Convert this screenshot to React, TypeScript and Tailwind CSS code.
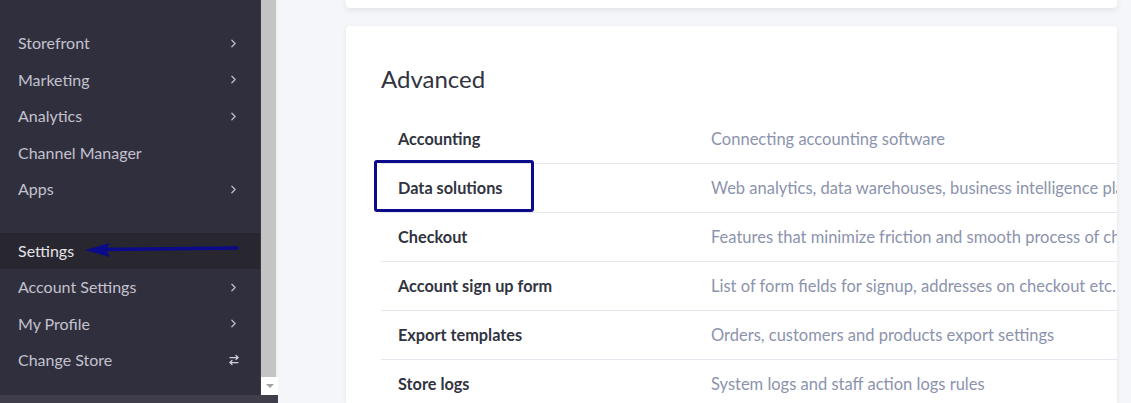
import { ChevronRight, ArrowRightLeft } from "lucide-react";

type NavItem = { label: string; chevron?: boolean; swap?: boolean; active?: boolean };

const navTop: NavItem[] = [
  { label: "Storefront", chevron: true },
  { label: "Marketing", chevron: true },
  { label: "Analytics", chevron: true },
  { label: "Channel Manager" },
  { label: "Apps", chevron: true },
];

const navBottom: NavItem[] = [
  { label: "Settings", active: true },
  { label: "Account Settings", chevron: true },
  { label: "My Profile", chevron: true },
  { label: "Change Store", swap: true },
];

const rows = [
  { name: "Accounting", desc: "Connecting accounting software" },
  { name: "Data solutions", desc: "Web analytics, data warehouses, business intelligence platforms" },
  { name: "Checkout", desc: "Features that minimize friction and smooth process of checkout" },
  { name: "Account sign up form", desc: "List of form fields for signup, addresses on checkout etc." },
  { name: "Export templates", desc: "Orders, customers and products export settings" },
  { name: "Store logs", desc: "System logs and staff action logs rules" },
];

function NavRow({ item }: { item: NavItem }) {
  return (
    <div
      className={
        "flex h-[36.5px] items-center justify-between pl-[18px] pr-[20px] text-[16px] " +
        (item.active ? "bg-[#28272f] text-[#e4e4ea]" : "text-[#c3c2cf]")
      }
    >
      <span>{item.label}</span>
      {item.chevron && <ChevronRight size={13} strokeWidth={2.5} className="text-[#b9b8c6]" />}
      {item.swap && <ArrowRightLeft size={12} strokeWidth={2.5} className="text-[#d0cfda]" />}
    </div>
  );
}

export default function App() {
  return (
    <div
      className="relative flex h-[403px] w-[1131px] overflow-hidden bg-[#f5f6f9]"
      style={{ fontFamily: "Lato, 'Noto Sans', sans-serif" }}
    >
      {/* sidebar */}
      <aside className="flex w-[278px] shrink-0 flex-col">
        <div className="flex flex-1">
          <nav className="w-[260px] bg-[#302f3d] pt-[25px]">
            {navTop.map((item) => (
              <NavRow key={item.label} item={item} />
            ))}
            <div className="h-[25px]" />
            {navBottom.map((item) => (
              <NavRow key={item.label} item={item} />
            ))}
          </nav>
          <div className="flex w-[18px] flex-col border-l border-[#3a3946] bg-[#f1f1f1]">
            <div className="mr-[2px] flex-1 bg-[#c4c4c4]" />
            <div className="flex h-[18px] items-center justify-center bg-white">
              <div className="h-0 w-0 border-x-[4px] border-t-[4px] border-x-transparent border-t-[#a3a3a3]" />
            </div>
          </div>
        </div>
        <div className="h-[8px] bg-[#3f3e4a]" />
      </aside>

      {/* content */}
      <main className="flex min-w-0 flex-1 flex-col pl-[68px] pr-[14px]">
        <div className="h-[8px] rounded-b bg-white shadow-[0_2px_6px_rgba(40,45,70,0.10)]" />
        <section className="mt-[18px] flex-1 overflow-hidden rounded-t bg-white pl-[35px] pt-[38px] shadow-[0_1px_4px_rgba(40,45,70,0.08)]">
          <h2 className="mb-[21px] text-[24px] leading-[30px] text-[#313440]">Advanced</h2>
          <div className="w-[900px]">
            {rows.map((r, i) => (
              <div
                key={r.name}
                className={
                  "relative flex h-[49px] items-center whitespace-nowrap " +
                  (i < rows.length - 1 ? "border-b border-[#e6e8ef]" : "")
                }
              >
                <span className="w-[330px] shrink-0 pl-[17px] text-[16.3px] font-bold text-[#313440]">
                  {r.name}
                </span>
                <span className="text-[16.5px] text-[#8c93ad]">{r.desc}</span>
                {r.name === "Data solutions" && (
                  <div className="absolute left-[-7px] top-[-4px] h-[52px] w-[160px] rounded-[3px] border-[3px] border-[#0a0a8a]" />
                )}
              </div>
            ))}
          </div>
        </section>
      </main>

      {/* pointer toward Settings */}
      <svg className="absolute left-[80px] top-[240px]" width="162" height="20" viewBox="0 0 162 20">
        <line x1="20" y1="9.5" x2="157" y2="8" stroke="#0a0a8a" strokeWidth="3.5" strokeLinecap="round" />
        <polygon points="5,10 30,3 26,10 30,17" fill="#0a0a8a" />
      </svg>
    </div>
  );
}
